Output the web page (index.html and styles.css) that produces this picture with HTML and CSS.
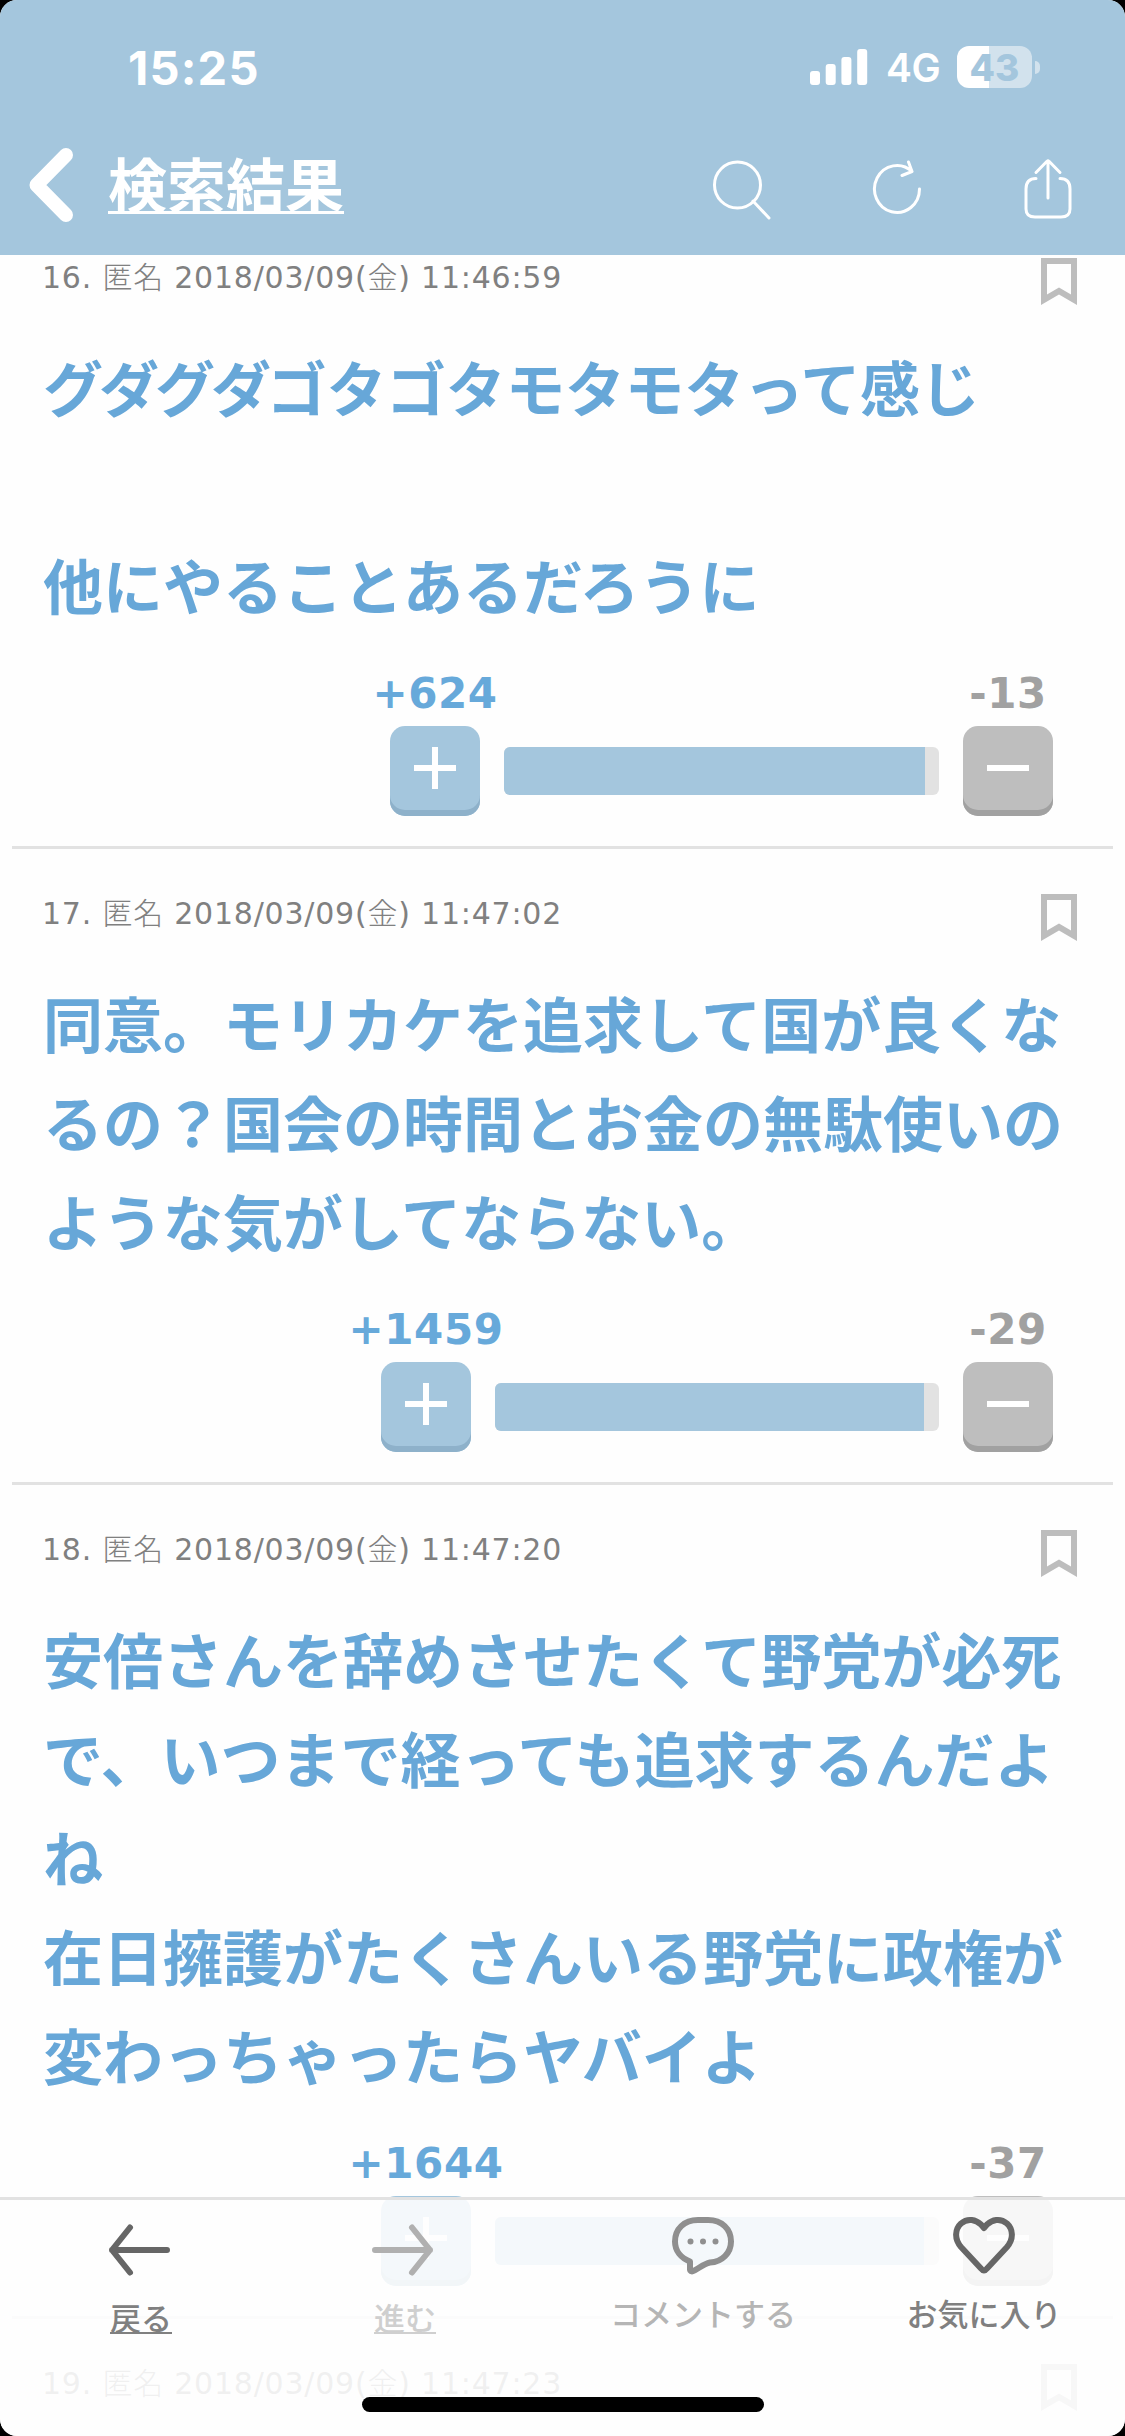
FILE: index.html
```html
<!DOCTYPE html>
<html lang="ja">
<head>
<meta charset="utf-8">
<title>検索結果</title>
<link rel="stylesheet" href="styles.css">
</head>
<body>
<svg width="0" height="0" class="defs">
  <symbol id="bookmark" viewBox="0 0 36 47"><path d="M0 0H36V47L18 36.500L0 47ZM6 6V36.500L18 29.500L30 36.500V6Z" fill="#bdbdbd" fill-rule="evenodd"/></symbol>
</svg>
<div class="screen">
  <header class="header">
    <div class="status">
      <span class="time">15:25</span>
      <div class="status-right">
        <svg class="signal" width="58" height="36" viewBox="0 0 58 36" fill="#fff"><rect x="0" y="22" width="10" height="14" rx="3"/><rect x="15.700" y="15" width="10" height="21" rx="3"/><rect x="31.400" y="8" width="10" height="28" rx="3"/><rect x="47.200" y="0" width="10" height="36" rx="3"/></svg>
        <span class="net">4G</span>
        <span class="battery"><span class="battery-text">43</span></span>
        <span class="battery-tip"></span>
      </div>
    </div>
    <nav class="nav">
      <svg class="back" width="46" height="76" viewBox="0 0 46 76" fill="none" stroke="#fff" stroke-width="14" stroke-linecap="round" stroke-linejoin="round"><path d="M38 8L8.500 38L38 68"/></svg>
      <a class="title">検索結果</a>
      <div class="actions">
        <svg width="60" height="64" viewBox="0 0 60 64"><circle cx="25.500" cy="29" r="23"/><path d="M41 45L57 62"/></svg>
        <svg width="52" height="60" viewBox="0 0 52 60"><path d="M48.500 33A22.500 23.500 0 1 1 41 15.500M37.500 6L41 15.500L31 19.500"/></svg>
        <svg width="52" height="64" viewBox="0 0 52 64"><path d="M14 22.500Q4 22.500 4 33V53Q4 61 13 61H39Q48 61 48 53V33Q48 22.500 38 22.500M26 42V5M14 16.500L25 5.300Q26 4.500 27 5.300L38 16.500"/></svg>
      </div>
    </nav>
  </header>

  <main class="posts">
    <article class="post">
      <div class="meta"><span>16. <b>匿名</b> 2018/03/09(<b>金</b>) 11:46:59</span><svg width="36" height="47"><use href="#bookmark"/></svg></div>
      <p class="body"><span class="tight">グダグダ</span><span class="snug">ゴタゴタモタモタって</span>感じ<br><br>他にやることあるだろうに</p>
      <div class="votes">
        <div class="vote up"><span class="count">+624</span><span class="btn"><svg width="42" height="42"><path d="M0 21H42M21 0V42"/></svg></span></div>
        <div class="bar" style="width:435px"><div class="fill" style="width:96.7%"></div></div>
        <div class="vote down"><span class="count">-13</span><span class="btn"><svg width="42" height="42"><path d="M0 21H42"/></svg></span></div>
      </div>
    </article>
    <article class="post">
      <div class="meta"><span>17. <b>匿名</b> 2018/03/09(<b>金</b>) 11:47:02</span><svg width="36" height="47"><use href="#bookmark"/></svg></div>
      <p class="body">同意。モリカケを追求して国が良くな<br>るの？国会の時間とお金の無駄使いの<br>ような気がしてならない。</p>
      <div class="votes">
        <div class="vote up"><span class="count">+1459</span><span class="btn"><svg width="42" height="42"><path d="M0 21H42M21 0V42"/></svg></span></div>
        <div class="bar" style="width:444px"><div class="fill" style="width:96.7%"></div></div>
        <div class="vote down"><span class="count">-29</span><span class="btn"><svg width="42" height="42"><path d="M0 21H42"/></svg></span></div>
      </div>
    </article>
    <article class="post">
      <div class="meta"><span>18. <b>匿名</b> 2018/03/09(<b>金</b>) 11:47:20</span><svg width="36" height="47"><use href="#bookmark"/></svg></div>
      <p class="body">安倍さんを辞めさせたくて野党が必死<br>で、いつまで経っても追求するんだよ<br>ね<br>在日擁護がたくさんいる野党に政権が<br>変わっちゃったらヤバイよ</p>
      <div class="votes">
        <div class="vote up"><span class="count">+1644</span><span class="btn"><svg width="42" height="42"><path d="M0 21H42M21 0V42"/></svg></span></div>
        <div class="bar" style="width:444px"><div class="fill" style="width:96.7%"></div></div>
        <div class="vote down"><span class="count">-37</span><span class="btn"><svg width="42" height="42"><path d="M0 21H42"/></svg></span></div>
      </div>
    </article>
    <article class="post">
      <div class="meta"><span>19. <b>匿名</b> 2018/03/09(<b>金</b>) 11:47:23</span><svg width="36" height="47"><use href="#bookmark"/></svg></div>
    </article>
  </main>

  <footer class="toolbar">
    <div class="tools">
      <a class="tool link prev"><svg width="62" height="62" viewBox="0 0 62 62"><path d="M59 34H4M22 11.500L4 34L22 56.500"/></svg><span>戻る</span></a>
      <a class="tool link next"><svg width="62" height="62" viewBox="0 0 62 62"><path d="M3 34H58M40 11.500L58 34L40 56.500"/></svg><span>進む</span></a>
      <a class="tool comment"><svg width="62" height="62" viewBox="0 0 62 62"><path d="M26 4H36C50 4 59 13 59 25.500C59 37 50 46 38 46.500C31 48 25 54 20 55.500Q17.500 55.500 18 52V45.500C9 42 3 35 3 25.500C3 13 12 4 26 4Z"/><g fill="#8f8f8f" stroke="none"><circle cx="18.500" cy="25.500" r="3"/><circle cx="31" cy="25.500" r="3"/><circle cx="43.500" cy="25.500" r="3"/></g></svg><span>コメントする</span></a>
      <a class="tool fav"><svg width="62" height="62" viewBox="0 0 62 62"><path d="M31 54.500Q29.500 54.500 28 52.500L8 31C1 23 2 13 8 7.500C15 1.500 23 4 28 8.500L31 12L34 8.500C39 4 47 1.500 54 7.500C60 13 61 23 54 31L34 52.500Q32.500 54.500 31 54.500Z"/></svg><span>お気に入り</span></a>
    </div>
    <div class="home"></div>
  </footer>
</div>
</body>
</html>
```
FILE: styles.css
```css
* { box-sizing: border-box; }
body { margin: 0; background: #000; font-family: "DejaVu Sans", "Noto Sans CJK JP", sans-serif; }
.defs { position: absolute; }
svg { display: block; flex: none; }
.screen { position: relative; width: 1125px; height: 2436px; overflow: hidden; border-radius: 17px; background: #fefefe; }

.header { position: relative; z-index: 1; height: 255px; background: #a4c6dd; color: #fff; }
.status { display: flex; justify-content: space-between; align-items: center; height: 134px; padding: 0 85px 0 128px; font-family: Inter, sans-serif; font-weight: 700; }
.time { font-size: 47px; letter-spacing: 1.2px; }
.status-right { display: flex; align-items: center; }
.net { width: 70px; padding-left: 18px; font-size: 39px; font-weight: 600; letter-spacing: -.5px; white-space: nowrap; }
.battery { width: 75px; height: 42px; margin-left: 19px; border-radius: 12px; background: linear-gradient(90deg, #fff 43%, #d2e2ed 43%); color: #a4c6dd; display: flex; align-items: center; justify-content: center; font-size: 37px; font-weight: 800; }
.battery-tip { width: 5px; height: 13px; margin-left: 3px; border-radius: 0 6px 6px 0; background: #d2e2ed; }
.nav { display: flex; align-items: flex-start; height: 121px; padding: 13px 51px 0 28px; }
.title { margin: -4px 0 0 34px; font: 700 59px/80px "Noto Sans CJK JP", sans-serif; text-decoration: underline; text-decoration-thickness: 3px; text-underline-offset: 3px; text-decoration-skip-ink: none; }
.actions { display: flex; justify-content: space-between; width: 362px; margin: 9px 0 0 auto; fill: none; stroke: #fff; stroke-width: 3; stroke-linecap: round; stroke-linejoin: round; }

.posts { margin-top: -45px; }
.post { margin: 0 12px; border-top: 3px solid #e2e2e2; padding: 45px 36px 30px 30px; }
.meta { display: flex; justify-content: space-between; height: 47px; color: #808080; font-size: 30px; line-height: 40px; letter-spacing: .78px; }
.meta b { font-family: "Noto Sans CJK JP", sans-serif; font-weight: 300; line-height: 1; }
.body { margin: 31px -20px 3px 1px; color: #67a7d8; font: 700 60px/99px "Noto Sans CJK JP", sans-serif; white-space: nowrap; }
.tight { letter-spacing: -4px; }
.snug { letter-spacing: -.4px; }
.votes { display: flex; justify-content: flex-end; align-items: flex-end; gap: 24px; padding: 32px 24px 0 0; }
.vote { display: flex; flex-direction: column; align-items: center; width: 90px; }
.count { height: 57px; margin-top: 1px; font-size: 42px; font-weight: 700; line-height: 50px; letter-spacing: .6px; white-space: nowrap; }
.up .count { color: #67a9da; }
.down .count { color: #a1a1a1; }
.btn { display: flex; justify-content: center; align-items: center; width: 90px; height: 90px; padding-bottom: 6px; border-radius: 15px; stroke: #fff; stroke-width: 6; }
.up .btn { background: #a4c6dd; box-shadow: inset 0 -6px #8eb1ca; }
.down .btn { background: #bebebe; box-shadow: inset 0 -6px #a1a1a1; }
.bar { height: 48px; margin-bottom: 21px; overflow: hidden; border-radius: 6px; background: #e2e2e2; }
.fill { height: 100%; background: #a4c6dd; }

.toolbar { position: absolute; left: 0; bottom: 0; width: 100%; height: 239px; border-top: 3px solid #e2e2e2; background: rgba(254, 254, 254, .89); }
.tools { display: grid; grid-template-columns: 281px 246px 352px 210px; height: 197px; }
.tool { display: flex; flex-direction: column; align-items: center; padding-top: 16px; font: 500 31px/40px "Noto Sans CJK JP", sans-serif; color: #808080; fill: none; stroke: #666; stroke-width: 6; stroke-linecap: round; stroke-linejoin: round; }
.tool span { margin-top: 15px; white-space: nowrap; }
.link span { margin: 19px -4px 0 0; text-decoration: underline; text-decoration-thickness: 2px; text-underline-offset: 2px; text-decoration-skip-ink: none; }
.prev { padding-right: 3px; }
.next { padding-right: 2px; color: #cfcfcf; stroke: #b0b0b0; }
.comment { color: #b5b5b5; stroke: #8f8f8f; }
.home { width: 402px; height: 15px; margin: 0 auto; border-radius: 8px; background: #000; }
```
